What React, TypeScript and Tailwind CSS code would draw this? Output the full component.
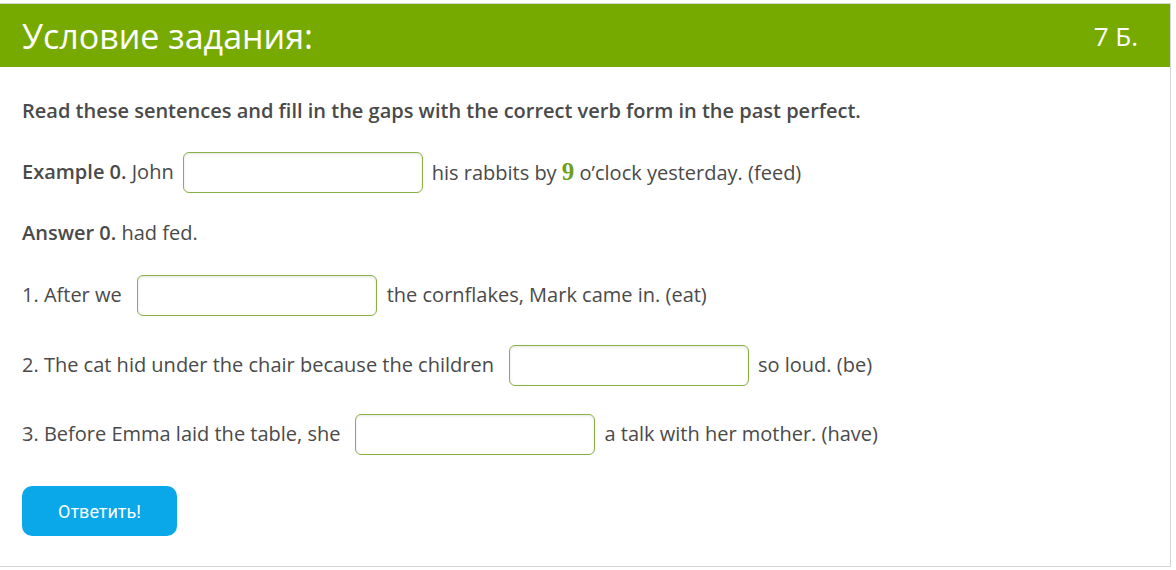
import React from 'react';

const Gap: React.FC<{ className?: string }> = ({ className = '' }) => (
  <input
    type="text"
    className={`h-[41px] w-[240px] rounded-[6px] border border-[#88b045] bg-white shadow-[inset_0_1px_3px_rgba(0,0,0,0.1)] outline-none ${className}`}
  />
);

const App: React.FC = () => {
  return (
    <div className="min-h-[570px] bg-white pt-[3px] font-['Open_Sans',sans-serif] text-[20px] text-[#4a4a4a]">
      <div className="h-[564px] w-[1171px] border-t border-r border-b border-[#d6d6d6]">
        <div className="flex h-[63px] items-center justify-between bg-[#77aa00] pl-[22px] pr-[32px] text-white">
          <h1 className="text-[34px] leading-none">Условие задания:</h1>
          <span className="text-[26px] leading-none">7 Б.</span>
        </div>

        <div className="px-[22px] pt-[30px]">
          <p className="leading-[28px] font-semibold">
            Read these sentences and fill in the gaps with the correct verb form in the past perfect.
          </p>

          <div className="mt-[26px] flex h-[42px] items-center">
            <span>
              <b className="font-semibold">Example 0.</b> John
            </span>
            <Gap className="mx-[9px]" />
            <span>
              his rabbits by{' '}
              <span className="font-['Liberation_Serif',serif] text-[25px] font-bold text-[#6f9f1c]">9</span>{' '}
              o’clock yesterday. (feed)
            </span>
          </div>

          <p className="mt-[26px] leading-[28px]">
            <b className="font-semibold">Answer 0.</b> had fed.
          </p>

          <div className="mt-[27px] flex h-[42px] items-center">
            <span>1. After we</span>
            <Gap className="ml-[15px] mr-[10px]" />
            <span>the cornflakes, Mark came in. (eat)</span>
          </div>

          <div className="mt-[28px] flex h-[42px] items-center">
            <span>2. The cat hid under the chair because the children</span>
            <Gap className="ml-[15px] mr-[9px]" />
            <span>so loud. (be)</span>
          </div>

          <div className="mt-[27px] flex h-[42px] items-center">
            <span>3. Before Emma laid the table, she</span>
            <Gap className="ml-[15px] mr-[9px]" />
            <span>a talk with her mother. (have)</span>
          </div>

          <button className="mt-[31px] h-[50px] w-[155px] rounded-[10px] bg-[#0aa8e8] font-['Roboto',sans-serif] text-[18px] text-white">
            Ответить!
          </button>
        </div>
      </div>
    </div>
  );
};

export default App;
